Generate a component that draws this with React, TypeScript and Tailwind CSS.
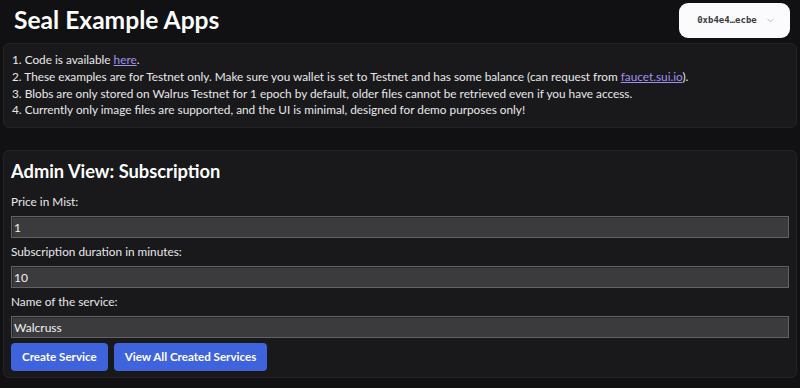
import { ChevronDown } from "lucide-react";

const font = { fontFamily: 'Lato, "Noto Sans", sans-serif' };

function Field({ label, value }: { label: string; value: string }) {
  return (
    <div className="flex flex-col gap-[6px]">
      <label className="text-[11.8px] leading-[16px] text-[#e8e8ea]">{label}</label>
      <input
        type="text"
        defaultValue={value}
        className="h-[22px] w-full border border-[#626265] bg-[#3b3b3d] px-[2px] text-[12px] text-[#f1f1f2] outline-none shadow-[inset_1px_1px_0_#2a2a2c]"
      />
    </div>
  );
}

export default function App() {
  return (
    <div className="min-h-[388px] bg-[#111113] px-[3px] pt-[3px] text-[#eeeef0]" style={font}>
      {/* Header */}
      <div className="flex items-start justify-between">
        <h1 className="ml-[11px] mt-[2px] text-[24.6px] font-bold leading-[30px] text-white">
          Seal Example Apps
        </h1>
        <button className="mr-[7px] flex h-[35px] w-[111px] items-center justify-center gap-[8px] rounded-[9px] bg-[#fbfbfd] pl-[4px]">
          <span className="text-[9px] font-bold text-[#3a3a40]" style={{ fontFamily: '"DejaVu Sans Mono", monospace' }}>
            0xb4e4…ecbe
          </span>
          <ChevronDown className="h-[11px] w-[11px] text-[#a0a0a8]" strokeWidth={1.5} />
        </button>
      </div>

      {/* Info card */}
      <div className="mt-[5px] rounded-[6px] border border-[#232326] bg-[#19191b] px-[8px] py-[8px] text-[11.8px] leading-[16.75px] text-[#e8e8ea]">
        <p>
          1. Code is available{" "}
          <a href="#" className="text-[#a391f2] underline">
            here
          </a>
          .
        </p>
        <p>
          2. These examples are for Testnet only. Make sure you wallet is set to Testnet and has some balance (can request from{" "}
          <a href="#" className="text-[#a391f2] underline">
            faucet.sui.io
          </a>
          ).
        </p>
        <p>3. Blobs are only stored on Walrus Testnet for 1 epoch by default, older files cannot be retrieved even if you have access.</p>
        <p>4. Currently only image files are supported, and the UI is minimal, designed for demo purposes only!</p>
      </div>

      {/* Admin card */}
      <div className="mt-[22px] rounded-[6px] border border-[#232326] bg-[#19191b] px-[7px] pb-[6px] pt-[6px]">
        <h2 className="text-[18.3px] font-bold leading-[28px] text-white">Admin View: Subscription</h2>
        <div className="mt-[9px] flex flex-col gap-[6px]">
          <Field label="Price in Mist:" value="1" />
          <Field label="Subscription duration in minutes:" value="10" />
          <Field label="Name of the service:" value="Walcruss" />
        </div>
        <div className="mt-[5px] flex gap-[6px]">
          <button className="h-[28px] rounded-[4px] bg-[#3e63dd] px-[11px] text-[11.6px] font-bold text-white">
            Create Service
          </button>
          <button className="h-[28px] rounded-[4px] bg-[#3e63dd] px-[11px] text-[11.6px] font-bold text-white">
            View All Created Services
          </button>
        </div>
      </div>
    </div>
  );
}
